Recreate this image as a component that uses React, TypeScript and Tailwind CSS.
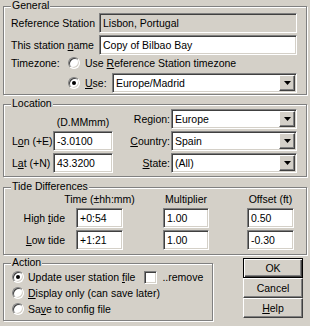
import React from "react";

const SUNKEN =
  "border border-t-[#808080] border-l-[#808080] border-r-white border-b-white shadow-[inset_1px_1px_0_#404040,inset_-1px_-1px_0_#d4d0c8]";
const RAISED =
  "border border-t-white border-l-white border-r-[#404040] border-b-[#404040] bg-[#d4d0c8] shadow-[inset_-1px_-1px_0_#808080]";

function GroupBox({ title, className, children }: { title: string; className: string; children: React.ReactNode }) {
  return (
    <section
      className={`relative border border-[#808080] shadow-[inset_1px_1px_0_#fff,1px_1px_0_#fff] ${className}`}
    >
      <span className="absolute left-[7px] top-[-8px] bg-[#d4d0c8] px-px">{title}</span>
      {children}
    </section>
  );
}

function Field({ value, gray, className = "" }: { value: string; gray?: boolean; className?: string }) {
  return (
    <div
      className={`flex h-[20px] items-center whitespace-nowrap pl-[3px] ${gray ? "bg-[#d4d0c8]" : "bg-white"} ${SUNKEN} ${className}`}
    >
      {value}
    </div>
  );
}

function Select({ value, className = "" }: { value: string; className?: string }) {
  return (
    <div className={`flex h-[20px] items-center bg-white ${SUNKEN} ${className}`}>
      <span className="flex-1 whitespace-nowrap pl-[3px]">{value}</span>
      <span className={`mr-px flex h-[16px] w-[16px] items-center justify-center ${RAISED}`}>
        <svg width="7" height="4" viewBox="0 0 7 4" aria-hidden="true">
          <path d="M0 0h7l-3.5 4z" fill="#000" />
        </svg>
      </span>
    </div>
  );
}

function Radio({ checked }: { checked?: boolean }) {
  return (
    <span
      className={`flex h-[12px] w-[12px] shrink-0 items-center justify-center rounded-full bg-white ${SUNKEN}`}
    >
      {checked && <span className="h-[4px] w-[4px] rounded-full bg-black" />}
    </span>
  );
}

function Button({ children, isDefault }: { children: React.ReactNode; isDefault?: boolean }) {
  return (
    <button
      className={
        isDefault
          ? "flex h-[20px] w-[60px] items-center justify-center border border-black bg-[#d4d0c8] shadow-[inset_1px_1px_0_#fff,inset_-1px_-1px_0_#404040,inset_-2px_-2px_0_#808080]"
          : `flex h-[20px] w-[60px] items-center justify-center ${RAISED}`
      }
    >
      {children}
    </button>
  );
}

export default function App() {
  return (
    <div className="h-[326px] w-[310px] overflow-hidden bg-[#d4d0c8] px-[3px] pt-[6px] font-['Liberation_Sans',Arial,sans-serif] text-[10.5px] leading-[13px] text-black">
      {/* General */}
      <GroupBox title="General" className="pb-[1px] pl-[7px] pr-[9px] pt-[6px]">
        <div className="flex h-[20px] items-center">
          <span className="w-[88px] whitespace-nowrap">Reference Station</span>
          <Field value="Lisbon, Portugal" gray className="flex-1" />
        </div>
        <div className="mt-[2px] flex h-[20px] items-center">
          <span className="w-[88px] whitespace-nowrap">
            This station <u>n</u>ame
          </span>
          <Field value="Copy of Bilbao Bay" className="flex-1" />
        </div>
        <div className="flex h-[16px] items-center">
          <span className="w-[57px]">Timezone:</span>
          <Radio />
          <span className="ml-[5px] whitespace-nowrap">
            Use <u>R</u>eference Station timezone
          </span>
        </div>
        <div className="mt-[2px] flex h-[20px] items-center">
          <span className="w-[57px]" />
          <Radio checked />
          <span className="ml-[5px] w-[27px]">
            <u>U</u>se:
          </span>
          <Select value="Europe/Madrid" className="flex-1" />
        </div>
      </GroupBox>

      {/* Location */}
      <GroupBox title="Location" className="mt-[9px] pb-[3px] pl-[7px] pr-[9px] pt-[4px]">
        <div className="grid grid-cols-[42px_60px_58px_126px] grid-rows-[20px_20px_20px] gap-y-[2px]">
          <span />
          <span className="self-end whitespace-nowrap text-center">(D.MMmm)</span>
          <span className="self-center pr-px text-right">Region:</span>
          <Select value="Europe" />

          <span className="self-center whitespace-nowrap pl-px">
            L<u>o</u>n (+E)
          </span>
          <Field value="-3.0100" />
          <span className="self-center pr-px text-right">
            <u>C</u>ountry:
          </span>
          <Select value="Spain" />

          <span className="self-center whitespace-nowrap pl-px">
            L<u>a</u>t (+N)
          </span>
          <Field value="43.3200" />
          <span className="self-center pr-px text-right">
            <u>S</u>tate:
          </span>
          <Select value="(All)" />
        </div>
      </GroupBox>

      {/* Tide Differences */}
      <GroupBox title="Tide Differences" className="mt-[10px] pb-[4px] pl-[7px] pr-[9px] pt-[5px]">
        <div className="flex h-[13px]">
          <span className="w-[54px]" />
          <span className="ml-[11px] flex w-[47px] justify-center whitespace-nowrap">Time (±hh:mm)</span>
          <span className="ml-[40px] flex w-[46px] justify-center whitespace-nowrap">Multiplier</span>
          <span className="ml-[38px] flex w-[47px] justify-center whitespace-nowrap">Offset (ft)</span>
        </div>
        <div className="mt-[2px] flex h-[20px] items-center">
          <span className="w-[54px] whitespace-nowrap text-right">
            High <u>t</u>ide
          </span>
          <Field value="+0:54" className="ml-[11px] w-[47px]" />
          <Field value="1.00" className="ml-[40px] w-[46px]" />
          <Field value="0.50" className="ml-[38px] w-[47px]" />
        </div>
        <div className="mt-[2px] flex h-[20px] items-center">
          <span className="w-[54px] whitespace-nowrap text-right">
            <u>L</u>ow tide
          </span>
          <Field value="+1:21" className="ml-[11px] w-[47px]" />
          <Field value="1.00" className="ml-[40px] w-[46px]" />
          <Field value="-0.30" className="ml-[38px] w-[47px]" />
        </div>
      </GroupBox>

      {/* Action + buttons */}
      <div className="flex items-start">
        <GroupBox title="Action" className="mt-[8px] w-[210px] pb-[3px] pl-[8px] pt-[5px]">
          <div className="flex h-[16px] items-center">
            <Radio checked />
            <span className="ml-[4px] whitespace-nowrap">
              Update user station <u>f</u>ile
            </span>
            <span className={`ml-[9px] h-[13px] w-[13px] bg-white ${SUNKEN}`} />
            <span className="ml-[5px]">..remove</span>
          </div>
          <div className="flex h-[16px] items-center">
            <Radio />
            <span className="ml-[4px] whitespace-nowrap">
              <u>D</u>isplay only (can save later)
            </span>
          </div>
          <div className="flex h-[16px] items-center">
            <Radio />
            <span className="ml-[4px] whitespace-nowrap">
              Sa<u>v</u>e to config file
            </span>
          </div>
        </GroupBox>
        <div className="ml-[30px] mt-[3px] flex w-[60px] flex-col">
          <Button isDefault>OK</Button>
          <Button>Cancel</Button>
          <Button>
            <u>H</u>elp
          </Button>
        </div>
      </div>
    </div>
  );
}
